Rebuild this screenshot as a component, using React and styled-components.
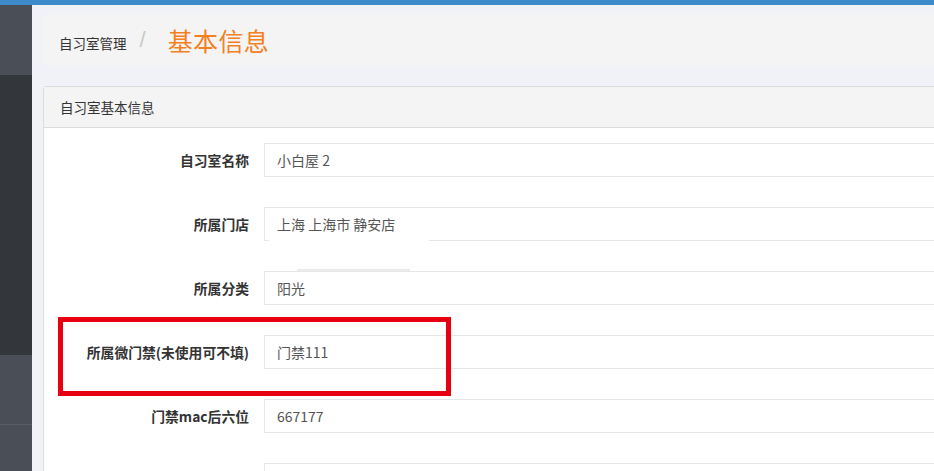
import React from 'react'
import styled, { createGlobalStyle } from 'styled-components'

const GlobalStyle = createGlobalStyle`
  html, body {
    margin: 0;
    padding: 0;
    background: #f0f2f7;
    font-family: "Noto Sans CJK SC", "Noto Sans", sans-serif;
    overflow: hidden;
  }
`

const Page = styled.div`
  width: 934px;
  height: 471px;
  overflow: hidden;
  display: flex;
  flex-direction: column;
`

const TopBar = styled.div`
  height: 5px;
  background: #3e8bcb;
  flex-shrink: 0;
`

const Body = styled.div`
  display: flex;
  flex: 1;
`

const Sidebar = styled.div`
  width: 32px;
  flex-shrink: 0;
  display: flex;
  flex-direction: column;
  background: #33363b;
`

const SideBlock = styled.div`
  height: ${p => p.h}px;
  background: ${p => p.light ? '#4a4e56' : '#33363b'};
  border-bottom: ${p => p.line ? '1px solid #5a5e66' : 'none'};
  flex-shrink: 0;
`

const Main = styled.div`
  flex: 1;
  padding: 10px 0 0 11px;
  overflow: hidden;
`

const Heading = styled.div`
  height: 50px;
  width: 1000px;
  background: #f4f4f4;
  border-radius: 3px;
  display: flex;
  align-items: center;
  padding-left: 16px;
  box-sizing: border-box;
`

const Crumb = styled.span`
  font-size: 13.5px;
  color: #333;
  margin-top: 6px;
`

const Slash = styled.span`
  font-size: 22px;
  color: #c8c8c8;
  margin: 0 22px 0 13px;
  font-family: "Liberation Sans", sans-serif;
`

const Title = styled.span`
  font-size: 25px;
  color: #f5801f;
  letter-spacing: 0.4px;
`

const Panel = styled.div`
  margin-top: 21px;
  width: 1000px;
  border: 1px solid #dcdcdc;
  border-radius: 3px;
  background: #fff;
  position: relative;
`

const PanelHead = styled.div`
  height: 40px;
  background: #f4f4f4;
  border-bottom: 1px solid #dcdcdc;
  display: flex;
  align-items: center;
  padding-left: 16px;
  font-size: 13.5px;
  color: #333;
`

const PanelBody = styled.div`
  padding-top: 15px;
`

const Row = styled.div`
  display: flex;
  align-items: center;
  height: 34px;
  margin-bottom: 30px;
`

const Label = styled.label`
  width: 220px;
  padding-right: 15px;
  box-sizing: border-box;
  text-align: right;
  font-size: 13.8px;
  font-weight: bold;
  color: #333;
`

const Field = styled.div`
  flex: 1;
  height: 34px;
  box-sizing: border-box;
  border: 1px solid #e5e6e7;
  display: flex;
  align-items: center;
  padding-left: 12px;
  font-size: 14px;
  color: #555;
  position: relative;
`

const Patch = styled.div`
  position: absolute;
  left: ${p => p.x}px;
  top: ${p => p.y}px;
  width: ${p => p.w}px;
  height: ${p => p.hh}px;
  background: ${p => p.c};
`

const Highlight = styled.div`
  position: absolute;
  left: 14px;
  top: 230px;
  width: 393px;
  height: 79px;
  box-sizing: border-box;
  border: 5px solid #e60012;
  pointer-events: none;
`

const rows = [
  ['自习室名称', '小白屋 2'],
  ['所属门店', '上海 上海市 静安店'],
  ['所属分类', '阳光'],
  ['所属微门禁(未使用可不填)', '门禁111'],
  ['门禁mac后六位', '667177'],
  ['', ''],
]

export default function App() {
  return (
    <Page>
      <GlobalStyle />
      <TopBar />
      <Body>
        <Sidebar>
          <SideBlock h={70} light />
          <SideBlock h={280} />
          <SideBlock h={69} light line />
          <SideBlock h={60} light />
        </Sidebar>
        <Main>
          <Heading>
            <Crumb>自习室管理</Crumb>
            <Slash>/</Slash>
            <Title>基本信息</Title>
          </Heading>
          <Panel>
            <PanelHead>自习室基本信息</PanelHead>
            <PanelBody>
              {rows.map(([label, value], i) => (
                <Row key={i}>
                  <Label>{label}</Label>
                  <Field>
                    {value}
                    {i === 1 && <Patch x={4} y={30} w={160} hh={4} c="#fff" />}
                    {i === 2 && <Patch x={32} y={-3} w={113} hh={2} c="#ebebeb" />}
                  </Field>
                </Row>
              ))}
            </PanelBody>
            <Highlight />
          </Panel>
        </Main>
      </Body>
    </Page>
  )
}
